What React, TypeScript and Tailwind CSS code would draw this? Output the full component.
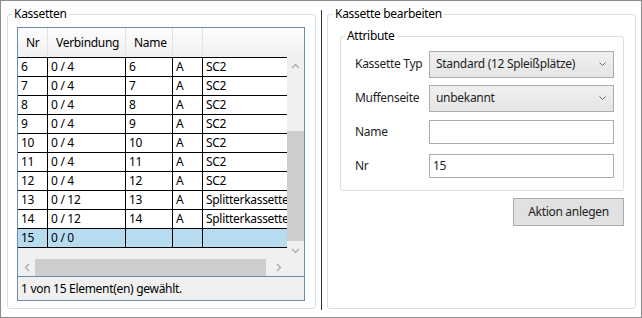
import React from "react";

const rows: string[][] = [
  ["6", "0 / 4", "6", "A", "SC2"],
  ["7", "0 / 4", "7", "A", "SC2"],
  ["8", "0 / 4", "8", "A", "SC2"],
  ["9", "0 / 4", "9", "A", "SC2"],
  ["10", "0 / 4", "10", "A", "SC2"],
  ["11", "0 / 4", "11", "A", "SC2"],
  ["12", "0 / 4", "12", "A", "SC2"],
  ["13", "0 / 12", "13", "A", "Splitterkassette"],
  ["14", "0 / 12", "14", "A", "Splitterkassette"],
  ["15", "0 / 0", "", "", ""],
];

const Chevron = ({ dir }: { dir: "up" | "down" | "left" | "right" }) => {
  if (dir === "up")
    return (
      <svg width="9" height="6" viewBox="0 0 9 6">
        <polyline points="1,5 4.5,1.5 8,5" fill="none" stroke="#a6a6a6" strokeWidth="1.2" />
      </svg>
    );
  if (dir === "down")
    return (
      <svg width="9" height="6" viewBox="0 0 9 6">
        <polyline points="1,1 4.5,4.5 8,1" fill="none" stroke="#a6a6a6" strokeWidth="1.2" />
      </svg>
    );
  if (dir === "left")
    return (
      <svg width="6" height="9" viewBox="0 0 6 9">
        <polyline points="5,1 1.5,4.5 5,8" fill="none" stroke="#a6a6a6" strokeWidth="1.2" />
      </svg>
    );
  return (
    <svg width="6" height="9" viewBox="0 0 6 9">
      <polyline points="1,1 4.5,4.5 1,8" fill="none" stroke="#a6a6a6" strokeWidth="1.2" />
    </svg>
  );
};

const ComboChevron = () => (
  <svg width="7" height="4" viewBox="0 0 7 4">
    <polyline points="0.5,0.5 3.5,3.5 6.5,0.5" fill="none" stroke="#6e6e6e" strokeWidth="1" />
  </svg>
);

const Row = ({ r, selected, last }: { r: string[]; selected: boolean; last: boolean }) => (
  <div
    className={
      "flex border-t border-black " +
      (last ? "border-b h-[20px] " : "h-[19px] ") +
      (selected ? "bg-[#b8dcef]" : "bg-white")
    }
  >
    <div className="w-[30px] border-r border-black pl-[3px] leading-[18px] overflow-hidden whitespace-nowrap">{r[0]}</div>
    <div className="w-[78px] border-r border-black pl-[3px] leading-[18px] overflow-hidden whitespace-nowrap">{r[1]}</div>
    <div className="w-[47px] border-r border-black pl-[3px] leading-[18px] overflow-hidden whitespace-nowrap">{r[2]}</div>
    <div className="w-[30px] border-r border-black pl-[3px] leading-[18px] overflow-hidden whitespace-nowrap">{r[3]}</div>
    <div className="w-[84px] pl-[3px] leading-[18px] overflow-hidden whitespace-nowrap">{r[4]}</div>
  </div>
);

export default function App() {
  return (
    <div className="w-[642px] h-[318px] border border-[#8c8c8c] bg-white flex text-[12px] tracking-[-0.3px] text-black font-['Noto_Sans',sans-serif]">
      {/* Left group */}
      <fieldset className="ml-[6px] mt-[5px] w-[309px] h-[303px] border border-[#d5dfe5] rounded-[3px] p-0">
        <legend className="ml-[4px] px-[2px] leading-[16px]">Kassetten</legend>
        <div className="ml-[9px] mt-[5px] w-[288px] h-[274px] border border-[#688caf] flex flex-col bg-[#f0f0f0]">
          <div className="flex h-[231px]">
            <div className="w-[269px] flex flex-col">
              <div className="flex h-[29px] bg-gradient-to-b from-[#fdfdfd] to-[#f0f0f0]">
                <div className="w-[30px] border-r border-[#e3e3e3] pl-[8px] flex items-center">Nr</div>
                <div className="w-[78px] border-r border-[#e3e3e3] pl-[8px] flex items-center">Verbindung</div>
                <div className="w-[47px] border-r border-[#e3e3e3] pl-[8px] flex items-center">Name</div>
                <div className="w-[30px] border-r border-[#e3e3e3]" />
                <div className="w-[84px]" />
              </div>
              {rows.map((r, i) => (
                <Row key={i} r={r} selected={i === rows.length - 1} last={i === rows.length - 1} />
              ))}
            </div>
            <div className="w-[17px] flex flex-col">
              <div className="h-[29px] bg-gradient-to-b from-[#fdfdfd] to-[#f0f0f0]" />
              <div className="flex-1 flex flex-col bg-[#f0f0f0]">
                <div className="h-[17px] flex items-center justify-center">
                  <Chevron dir="up" />
                </div>
                <div className="flex-1">
                  <div className="mt-[57px] h-[110px] bg-[#cdcdcd]" />
                </div>
                <div className="h-[17px] flex items-center justify-center">
                  <Chevron dir="down" />
                </div>
              </div>
            </div>
          </div>
          <div className="flex h-[17px]">
            <div className="w-[269px] flex bg-[#f0f0f0]">
              <div className="w-[17px] flex items-center justify-center">
                <Chevron dir="left" />
              </div>
              <div className="flex-1">
                <div className="w-[231px] h-full bg-[#cdcdcd]" />
              </div>
              <div className="w-[17px] flex items-center justify-center">
                <Chevron dir="right" />
              </div>
            </div>
            <div className="w-[17px] bg-[#f0f0f0]" />
          </div>
          <div className="h-[24px] border-t border-[#688caf] pl-[3px] leading-[23px] whitespace-nowrap">
            1 von 15 Element(en) gewählt.
          </div>
        </div>
      </fieldset>

      {/* Divider */}
      <div className="ml-[5px] mt-[9px] w-px h-[300px] bg-[#333333]" />

      {/* Right group */}
      <fieldset className="ml-[5px] mt-[5px] w-[309px] h-[303px] border border-[#d5dfe5] rounded-[3px] p-0">
        <legend className="ml-[5px] px-[2px] leading-[16px]">Kassette bearbeiten</legend>
        <div className="pl-[12px] pr-[11px] pt-[6px]">
          <fieldset className="w-full h-[163px] border border-[#d5dfe5] rounded-[3px] p-0">
            <legend className="ml-[4px] px-[2px] leading-[16px]">Attribute</legend>
            <div className="pl-[14px] pt-[3px] grid grid-cols-[74px_185px] auto-rows-[34px] items-center text-[#1e1e1e]">
              <div>Kassette Typ</div>
              <div className="h-[27px] border border-[#acacac] bg-gradient-to-b from-[#f0f0f0] to-[#e5e5e5] flex items-center justify-between pl-[6px] pr-[7px] whitespace-nowrap">
                <span>Standard (12 Spleißplätze)</span>
                <ComboChevron />
              </div>
              <div>Muffenseite</div>
              <div className="h-[27px] border border-[#acacac] bg-gradient-to-b from-[#f0f0f0] to-[#e5e5e5] flex items-center justify-between pl-[6px] pr-[7px] whitespace-nowrap">
                <span>unbekannt</span>
                <ComboChevron />
              </div>
              <div>Name</div>
              <div className="h-[24px] border border-[#abadb3] bg-white" />
              <div>Nr</div>
              <div className="h-[24px] border border-[#abadb3] bg-white pl-[3px] flex items-center">15</div>
            </div>
          </fieldset>
          <div className="flex justify-end mt-[7px]">
            <button className="w-[111px] h-[28px] border border-[#adadad] bg-[#e1e1e1] text-[#1e1e1e] flex items-center justify-center">
              Aktion anlegen
            </button>
          </div>
        </div>
      </fieldset>
    </div>
  );
}
